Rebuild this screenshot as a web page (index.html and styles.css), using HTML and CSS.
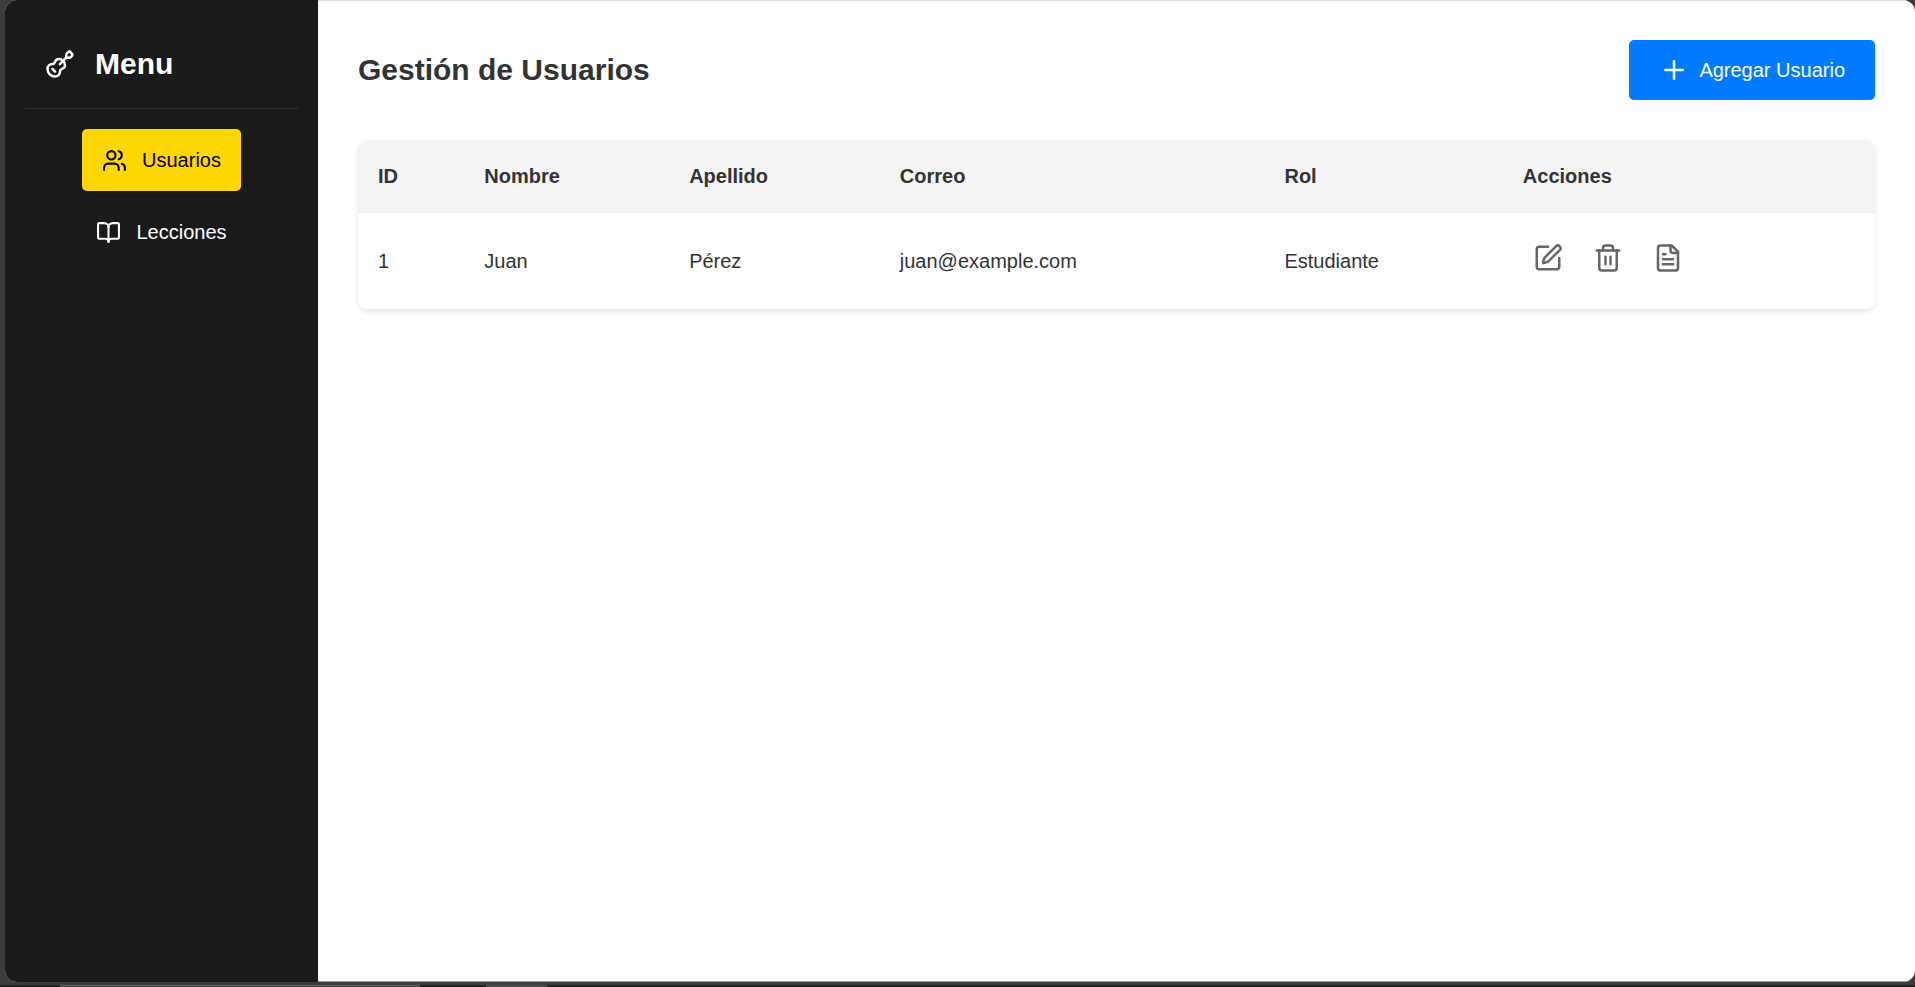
FILE: index.html
```html
<!DOCTYPE html>
<html lang="es">
<head>
<meta charset="utf-8">
<title>Gestión de Usuarios</title>
<link rel="stylesheet" href="styles.css">
</head>
<body>
<div class="desktop">
  <div class="window">
    <aside class="sidebar">
      <div class="brand">
        <svg class="icon icon-lg" viewBox="0 0 24 24" aria-hidden="true"><path d="m11.9 12.1 4.514-4.514"/><path d="M20.1 2.3a1 1 0 0 0-1.4 0l-1.114 1.114A2 2 0 0 0 17 4.828v1.344a2 2 0 0 1-.586 1.414A2 2 0 0 1 17.828 7h1.344a2 2 0 0 0 1.414-.586L21.7 5.3a1 1 0 0 0 0-1.4z"/><path d="m6 16 2 2"/><path d="M8.23 9.85A3 3 0 0 1 11 8a5 5 0 0 1 5 5 3 3 0 0 1-1.85 2.77l-.92.38A2 2 0 0 0 12 18a4 4 0 0 1-4 4 6 6 0 0 1-6-6 4 4 0 0 1 4-4 2 2 0 0 0 1.85-1.23z"/></svg>
        <h2 class="brand-title">Menu</h2>
      </div>
      <nav class="menu">
        <a class="menu-item active" href="#usuarios">
          <svg class="icon" viewBox="0 0 24 24" aria-hidden="true"><path d="M16 21v-2a4 4 0 0 0-4-4H6a4 4 0 0 0-4 4v2"/><circle cx="9" cy="7" r="4"/><path d="M22 21v-2a4 4 0 0 0-3-3.87"/><path d="M16 3.13a4 4 0 0 1 0 7.75"/></svg>
          <span>Usuarios</span>
        </a>
        <a class="menu-item" href="#lecciones">
          <svg class="icon" viewBox="0 0 24 24" aria-hidden="true"><path d="M12 7v14"/><path d="M3 18a1 1 0 0 1-1-1V4a1 1 0 0 1 1-1h5a4 4 0 0 1 4 4 4 4 0 0 1 4-4h5a1 1 0 0 1 1 1v13a1 1 0 0 1-1 1h-6a3 3 0 0 0-3 3 3 3 0 0 0-3-3z"/></svg>
          <span>Lecciones</span>
        </a>
      </nav>
    </aside>
    <main class="content">
      <header class="page-header">
        <h1 class="page-title">Gestión de Usuarios</h1>
        <button class="add-button" type="button">
          <svg class="icon icon-lg" viewBox="0 0 24 24" aria-hidden="true"><path d="M5 12h14M12 5v14"/></svg>
          <span>Agregar Usuario</span>
        </button>
      </header>
      <div class="card">
        <table class="users">
          <thead>
            <tr><th>ID</th><th>Nombre</th><th>Apellido</th><th>Correo</th><th>Rol</th><th>Acciones</th></tr>
          </thead>
          <tbody>
            <tr>
              <td>1</td><td>Juan</td><td>Pérez</td><td>juan@example.com</td><td>Estudiante</td>
              <td>
                <div class="actions">
                  <button class="action" type="button" aria-label="Editar"><svg class="icon icon-lg" viewBox="0 0 24 24" aria-hidden="true"><path d="M12 3H5a2 2 0 0 0-2 2v14a2 2 0 0 0 2 2h14a2 2 0 0 0 2-2v-7"/><path d="M18.375 2.625a1 1 0 0 1 3 3l-9.013 9.014a2 2 0 0 1-.853.505l-2.873.84a.5.5 0 0 1-.62-.62l.84-2.873a2 2 0 0 1 .506-.852z"/></svg></button>
                  <button class="action" type="button" aria-label="Eliminar"><svg class="icon icon-lg" viewBox="0 0 24 24" aria-hidden="true"><path d="M3 6h18"/><path d="M19 6v14a2 2 0 0 1-2 2H7a2 2 0 0 1-2-2V6"/><path d="M8 6V4a2 2 0 0 1 2-2h4a2 2 0 0 1 2 2v2"/><path d="M10 11v6M14 11v6"/></svg></button>
                  <button class="action" type="button" aria-label="Ver detalles"><svg class="icon icon-lg" viewBox="0 0 24 24" aria-hidden="true"><path d="M15 2H6a2 2 0 0 0-2 2v16a2 2 0 0 0 2 2h12a2 2 0 0 0 2-2V7z"/><path d="M14 2v4a2 2 0 0 0 2 2h4"/><path d="M10 9H8M16 13H8M16 17H8"/></svg></button>
                </div>
              </td>
            </tr>
          </tbody>
        </table>
      </div>
    </main>
  </div>
  <div class="taskbar"><span class="task task-open"></span><span class="task task-small"></span></div>
</div>
</body>
</html>
```
FILE: styles.css
```css
* {
  box-sizing: border-box;
}

body {
  margin: 0;
  font-family: Arial, "Liberation Sans", sans-serif;
  font-size: 20px;
  line-height: 32px;
  color: #333;
}

.desktop {
  display: flex;
  flex-direction: column;
  height: 100vh;
  background: #3c3c3c;
}

.window {
  display: flex;
  flex: 1;
  margin: 0 0 3px 5px;
  border-radius: 12px;
  overflow: hidden;
  background: #fff;
}

.icon {
  display: block;
  flex: none;
  width: 25px;
  height: 25px;
  fill: none;
  stroke: currentColor;
  stroke-width: 2;
  stroke-linecap: round;
  stroke-linejoin: round;
}

.icon-lg {
  width: 30px;
  height: 30px;
}

.sidebar {
  flex: none;
  width: 313px;
  padding: 20px;
  background: #1a1a1a;
  color: #fff;
}

.brand {
  display: flex;
  align-items: center;
  gap: 20px;
  padding: 20px;
  margin-bottom: 20px;
  border-bottom: 1px solid #333;
}

.brand-title {
  margin: 0;
  font-size: 30px;
  line-height: 48px;
}

.menu {
  display: flex;
  flex-direction: column;
  align-items: center;
  gap: 10px;
}

.menu-item {
  display: flex;
  align-items: center;
  gap: 15px;
  padding: 15px 20px;
  border-radius: 5px;
  color: #fff;
  text-decoration: none;
}

.menu-item.active {
  background: #ffd700;
  color: #000;
}

.content {
  flex: 1;
  padding: 39px 40px;
  border-top: 1px solid #ddd;
  border-bottom: 1px solid #999;
}

.page-header {
  display: flex;
  align-items: center;
  justify-content: space-between;
  margin-bottom: 40px;
}

.page-title {
  margin: 0;
  font-size: 30px;
  line-height: 48px;
}

.add-button {
  display: flex;
  align-items: center;
  gap: 10px;
  padding: 14px 30px;
  border: 0;
  border-radius: 5px;
  background: #007bff;
  color: #fff;
  font: inherit;
}

.card {
  border-radius: 10px;
  overflow: hidden;
  background: #fff;
  box-shadow: 0 2px 5px rgba(0, 0, 0, 0.1);
}

.users {
  width: 100%;
  border-collapse: separate;
  border-spacing: 0;
}

.users th,
.users td {
  padding: 20px;
  border-bottom: 1px solid #eee;
  text-align: left;
}

.users th {
  background: #f4f4f4;
}

.actions {
  display: flex;
  gap: 10px;
}

.action {
  padding: 10px 10px 16px;
  border: 0;
  background: none;
  color: #666;
}

.taskbar {
  display: flex;
  height: 2px;
  padding-left: 60px;
  gap: 66px;
  background: #231f20;
}

.task-open {
  width: 360px;
  border-top: 1px solid #666;
  background: #3c3c3c;
}

.task-small {
  width: 61px;
  background: #4a4a4a;
}
```
